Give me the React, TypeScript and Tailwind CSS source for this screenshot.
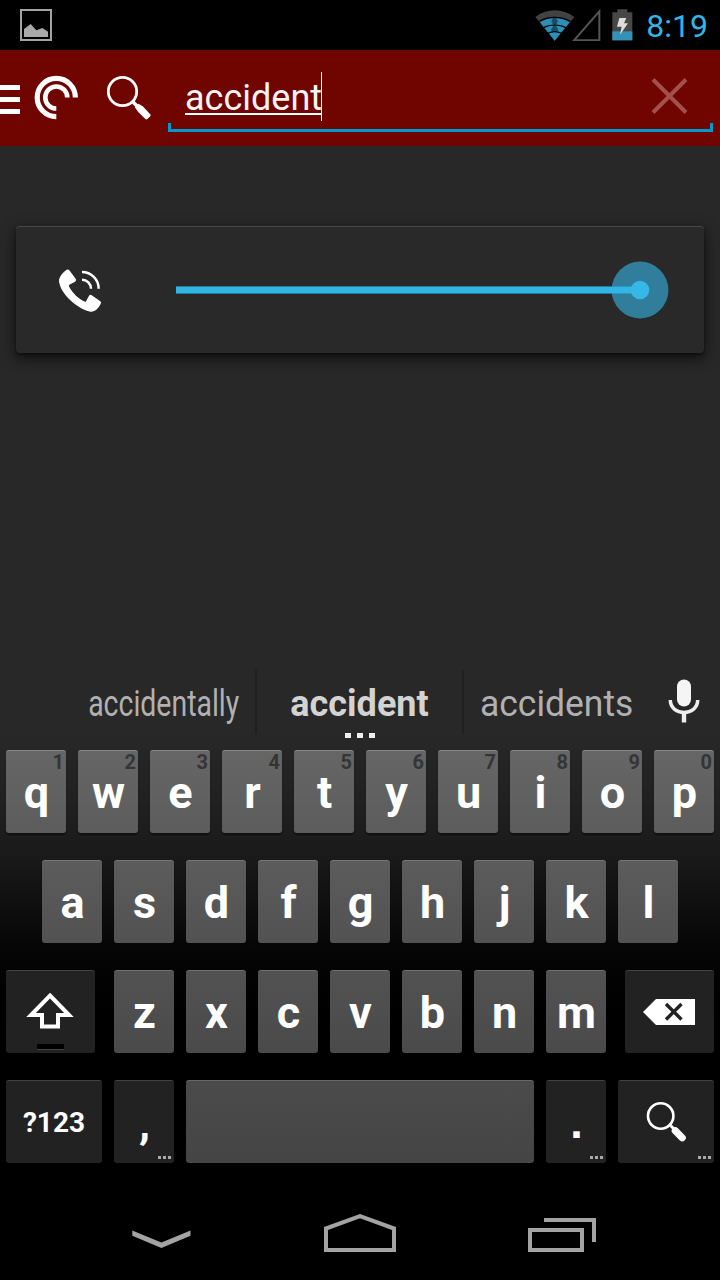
import type { ReactNode } from 'react';
import clsx from 'clsx';

function StatusBar() {
  return (
    <header className="flex h-[50px] shrink-0 items-center bg-black pl-5 pr-3">
      <svg className="h-8 w-8" viewBox="60 27 96 96">
        <rect x="63" y="30" width="90" height="90" fill="none" stroke="#a3a3a3" strokeWidth="6" />
        <path d="M72 111V87L92 72L109 91L127 84L144 95V111Z" fill="#a9a9a9" />
      </svg>
      <div className="ml-auto flex items-center">
        <svg className="h-8 w-[98px]" viewBox="104 26 294 96">
          <path d="M163 121L105 50Q131 30 163 30T222 50Z" fill="#424242" />
          <path d="M163 121L119 66Q139 53 163 53T208 66Z" fill="#2b8fb8" />
          <path d="M163 45L174 64H170V72H156V64H152ZM163 71L173 86V93H153V86Z" fill="#174e64" />
          <path d="M117 63Q137 51 163 51T210 63M129 82Q143 74 163 74T197 82M143 99Q152 94 163 94T184 99" fill="none" stroke="#000" strokeWidth="3.5" />
          <path d="M221 120L297 33V120Z" fill="none" stroke="#555" strokeWidth="6" />
          <path d="M336 36H351V27H381V36H396V120H336Z" fill="#474747" />
          <path d="M336 93H396V120H336Z" fill="#3492b9" />
          <path d="M357 53H378L371 69H383L359 103L364 79H350Z" fill="#ddd" />
        </svg>
        <span className="ml-[13px] pt-[2px] text-[32px] leading-[50px] text-[#33b5e5]">8:19</span>
      </div>
    </header>
  );
}

function SearchBar() {
  return (
    <div className="flex h-24 shrink-0 bg-[#700500]">
      <div className="flex w-5 flex-col gap-[7px] pt-[35px]">
        <div className="h-[5px] bg-white" />
        <div className="h-[5px] bg-white" />
        <div className="h-[5px] bg-white" />
      </div>
      <svg className="ml-3 mt-[23px] h-12 w-12" viewBox="32 73 48 48" fill="none" stroke="#fff">
        <path d="M75.4 97.5A19.1 19.1 0 1 0 56.3 116.6" strokeWidth="5.2" />
        <path d="M67.3 97.5A11 11 0 1 0 56.3 108.5" strokeWidth="4.6" />
      </svg>
      <svg className="ml-6 mt-[23px] h-12 w-12" viewBox="104 73 48 48">
        <circle cx="122.5" cy="91.5" r="14.2" fill="none" stroke="#fff" strokeWidth="2.8" />
        <path d="M132 101L137 106" stroke="#fff" strokeWidth="3.5" />
        <path d="M134.8 107.2L138.6 103.8L143 106.6L150.2 114.3Q151 115.2 150.2 116.2L147.4 119Q146.4 119.8 145.4 119L138.2 112Z" fill="#fff" />
      </svg>
      <div className="ml-4 flex w-[545px] flex-col">
        <div className="flex h-[73px] items-start pl-[17px] pt-[22px]">
          <div className="flex h-[49px] items-start border-r border-white">
            <span className="-mr-px mt-[5px] h-[38px] border-b-2 border-white pt-px text-[36px] leading-[40px] text-[#f3f3f3]">accident</span>
          </div>
          <svg className="ml-auto mr-[25px] mt-[4px] h-10 w-10" viewBox="648 76 40 40">
            <path d="M653 79.5L686 112.5M686 79.5L653 112.5" stroke="#a34f4b" strokeWidth="4" />
          </svg>
        </div>
        <div className="h-[9px] border-x-[3px] border-b-[3px] border-[#0099cc]" />
      </div>
    </div>
  );
}

function VolumePanel() {
  return (
    <section className="mx-4 mt-20 flex h-[127px] shrink-0 items-center rounded border-t border-[#494949] bg-[#292929] shadow-[0_5px_13px_2px_rgba(0,0,0,0.5),0_2px_3px_rgba(0,0,0,0.4)]">
      <svg className="ml-[41px] h-[47px] w-[47px]" viewBox="171 170 141 141">
        <path d="M200 178Q205 176 208 180L228 207Q229 213 224 215L208 223Q205 226 208 230C218 248 235 266 257 275L267 256Q270 252 274 254L301 273Q305 277 302 281C296 292 286 305 272 304C240 300 176 250 177 208C179 198 188 186 200 178Z" fill="#fff" />
        <path d="M246 185A50 50 0 0 1 296 235M246 208A27 27 0 0 1 273 235" fill="none" stroke="#fff" strokeWidth="7.5" />
      </svg>
      <svg className="ml-[72px] h-[60px] w-[496px]" viewBox="176 260 496 60">
        <rect x="176" y="286" width="464" height="8" fill="#237a99" />
        <circle cx="640" cy="290" r="28.4" fill="#307e9b" />
        <rect x="612" y="286" width="28" height="8" fill="#3194b9" />
        <rect x="176" y="287" width="464" height="6" fill="#33b5e5" />
        <circle cx="640" cy="290" r="9.3" fill="#35b7e8" />
      </svg>
    </section>
  );
}

function Suggestions() {
  return (
    <div className="flex h-20 shrink-0 text-[36px] leading-[42px] text-[#b1b1b1]">
      <div className="flex h-[64px] w-[257px] justify-end border-r-2 border-[#202020] pr-[16px] pt-[13px]">
        <span className="inline-block origin-right scale-x-[0.79]">accidentally</span>
      </div>
      <div className="flex h-[70px] w-[205px] flex-col items-center pt-[13px]">
        <strong className="text-[#d3d3d3]">accident</strong>
        <div className="mt-[8px] flex gap-[6px]">
          <i className="h-[5px] w-[6px] bg-[#eee]" />
          <i className="h-[5px] w-[6px] bg-[#eee]" />
          <i className="h-[5px] w-[6px] bg-[#eee]" />
        </div>
      </div>
      <div className="flex h-[64px] w-[187px] border-l-2 border-[#202020] pl-[16px] pt-[13px]">
        <span className="inline-block origin-left scale-x-[0.985]">accidents</span>
      </div>
      <svg className="ml-[16px] mt-[6px] h-[50px] w-[38px]" viewBox="665 676 38 50">
        <rect x="677" y="679.5" width="14" height="27" rx="7" fill="#f5f5f5" />
        <path d="M670.3 700C670.3 716.5 697.7 716.5 697.7 700" fill="none" stroke="#eee" strokeWidth="3.5" />
        <path d="M684 712V722.5" stroke="#eee" strokeWidth="4.4" />
      </svg>
    </div>
  );
}

const tones = {
  first: 'border-[#858585] bg-linear-to-b from-[#666] to-[#5c5c5c] shadow-[0_2px_1px_#111]',
  second: 'border-[#777] bg-linear-to-b from-[#5c5c5c] to-[#525252] shadow-[0_1px_1px_#080808]',
  third: 'border-[#707070] bg-linear-to-b from-[#525252] to-[#4a4a4a]',
  fourth: 'border-[#686868] bg-linear-to-b from-[#4b4b4b] to-[#454545]',
  dark: 'border-[#434343] bg-[#222]',
};

function Key({ tone, width = 'w-[60px]', hint, more, children }: {
  tone: keyof typeof tones;
  width?: string;
  hint?: number;
  more?: boolean;
  children?: ReactNode;
}) {
  return (
    <div className={clsx('relative flex h-[83px] shrink-0 justify-center rounded-[3px] border-t pl-px text-[45px] leading-[83px] font-bold text-white', width, tones[tone])}>
      {children}
      {hint !== undefined && <span className="absolute right-[2px] top-0 text-[20px] leading-[22px] text-[#353535]">{hint}</span>}
      {more && (
        <div className="absolute bottom-1 right-[3px] flex gap-[2px]">
          <i className="h-[3px] w-[3px] bg-[#aaa]" />
          <i className="h-[3px] w-[3px] bg-[#aaa]" />
          <i className="h-[3px] w-[3px] bg-[#aaa]" />
        </div>
      )}
    </div>
  );
}

function Keyboard() {
  return (
    <section className="mt-auto flex h-[517px] shrink-0 flex-col bg-linear-to-b from-[#282828] from-[12%] via-[#1a1a1a] via-[36%] to-black to-[77%]">
      <Suggestions />
      <div className="flex flex-col gap-[27px]">
        <div className="flex justify-center gap-3">
          {[...'qwertyuiop'].map((letter, i) => (
            <Key key={letter} tone="first" hint={(i + 1) % 10}>{letter}</Key>
          ))}
        </div>
        <div className="flex justify-center gap-3">
          {[...'asdfghjkl'].map((letter) => <Key key={letter} tone="second">{letter}</Key>)}
        </div>
        <div className="flex justify-between px-1.5">
          <Key tone="dark" width="w-[89px]">
            <svg className="-ml-px h-[82px] w-[89px] shrink-0" viewBox="6 971 89 82">
              <path d="M50 995.5L69 1015H58V1026.5H42V1015H31Z" fill="none" stroke="#fff" strokeWidth="4" />
              <rect x="37" y="1044" width="27" height="5" fill="#000" />
              <path d="M37 1049.5H64" stroke="#444" />
            </svg>
          </Key>
          <div className="flex gap-3">
            {[...'zxcvbnm'].map((letter) => <Key key={letter} tone="third">{letter}</Key>)}
          </div>
          <Key tone="dark" width="w-[89px]">
            <svg className="-ml-px h-[82px] w-[89px] shrink-0" viewBox="625 971 89 82">
              <path d="M643 1012L656 999H695V1025H656Z" fill="#fff" />
              <path d="M666 1004L681.5 1019.5M681.5 1004L666 1019.5" stroke="#222" strokeWidth="3.4" />
            </svg>
          </Key>
        </div>
        <div className="flex justify-center gap-3">
          <Key tone="dark" width="w-24"><span className="-ml-px text-[28px] leading-[83px]">?123</span></Key>
          <Key tone="dark" more><span>,</span></Key>
          <Key tone="fourth" width="w-[348px]" />
          <Key tone="dark" more><span className="font-['Liberation_Sans',sans-serif]">.</span></Key>
          <Key tone="dark" width="w-24" more>
            <svg className="-ml-px h-[82px] w-24 shrink-0" viewBox="618 1081 96 82">
              <circle cx="660.7" cy="1116" r="12.7" fill="none" stroke="#fff" strokeWidth="2.6" />
              <path d="M669 1124L674 1129" stroke="#fff" strokeWidth="3" />
              <path d="M675.3 1130.8L682.2 1137.7" stroke="#fff" strokeWidth="7.2" strokeLinecap="round" />
            </svg>
          </Key>
        </div>
      </div>
    </section>
  );
}

function NavigationBar() {
  return (
    <nav className="flex h-[93px] shrink-0 items-start bg-black pt-[23px] pl-[130px]">
      <svg className="h-12 w-16" viewBox="130 1210 64 48">
        <path d="M132.3 1230.5L161.4 1242.5L190.5 1230.5V1235.7L161.4 1248L132.3 1235.7Z" fill="#a3a3a3" />
      </svg>
      <svg className="ml-32 h-12 w-[76px]" viewBox="322 1210 76 48">
        <path d="M326 1228.5L360 1216.2L394 1228.5V1250H326Z" fill="none" stroke="#a3a3a3" strokeWidth="4" />
      </svg>
      <svg className="ml-32 h-12 w-[72px]" viewBox="526 1210 72 48" fill="none" stroke="#a3a3a3" strokeWidth="4">
        <path d="M530 1230H582V1250H530ZM544 1220H594V1242" />
      </svg>
    </nav>
  );
}

export default function App() {
  return (
    <main className="flex h-[1280px] w-[720px] flex-col overflow-hidden bg-[#282828] font-['Roboto',sans-serif]">
      <StatusBar />
      <SearchBar />
      <VolumePanel />
      <Keyboard />
      <NavigationBar />
    </main>
  );
}
